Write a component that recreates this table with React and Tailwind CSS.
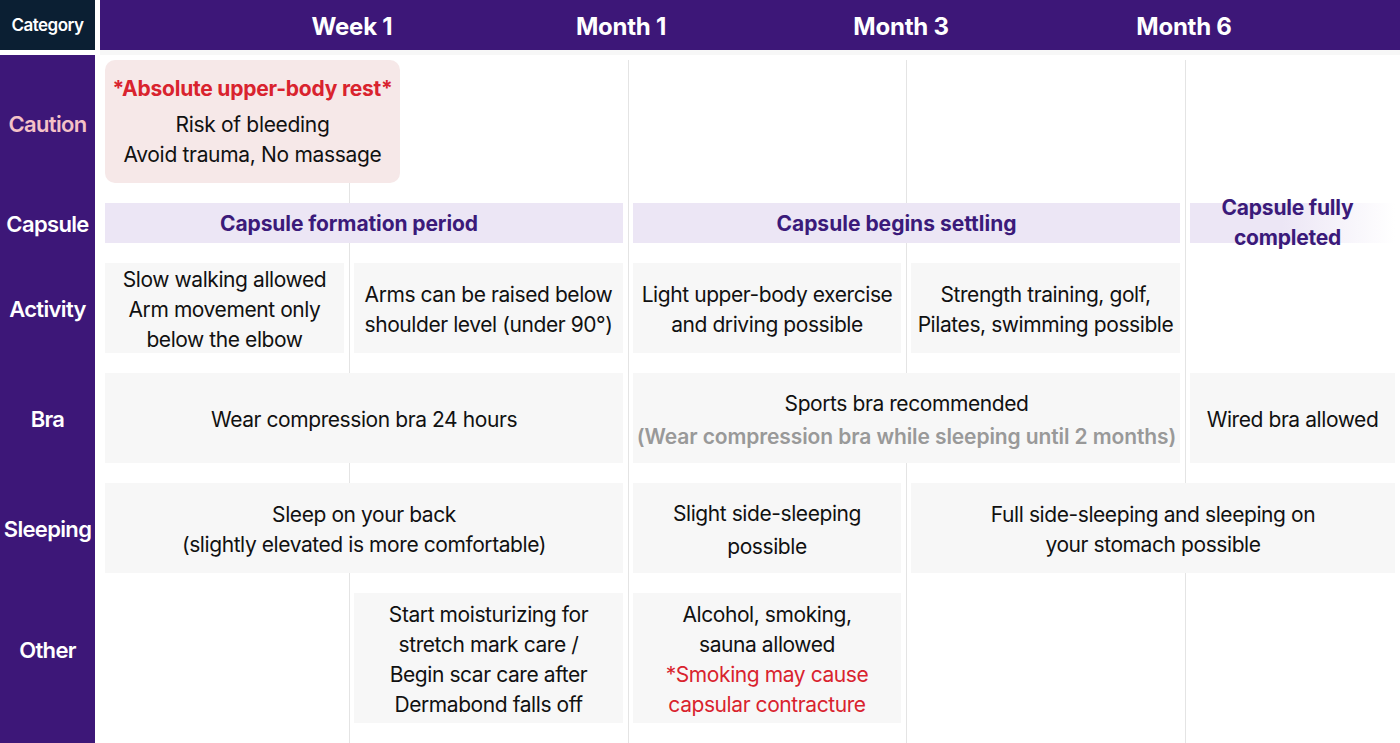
import React from "react";

const PURPLE = "bg-[#3d1778]";

function Box({ className = "", children }) {
  return (
    <div
      className={
        "my-[10px] mx-[5px] pt-[3px] bg-[#f7f7f7] flex flex-col items-center justify-center text-center text-[21px] leading-[30px] text-[#111] tracking-[-0.02em] " +
        className
      }
    >
      {children}
    </div>
  );
}

function Label({ children, className = "", color = "text-white" }) {
  return (
    <div
      className={
        "col-start-1 bg-[#3d1778] flex items-center justify-center font-semibold text-[22px] tracking-[-0.03em] " +
        color +
        " " +
        className
      }
    >
      {children}
    </div>
  );
}

export default function App() {
  return (
    <div
      className="w-[1400px] h-[743px] bg-white overflow-hidden"
      style={{ fontFamily: "Inter, 'Noto Sans', sans-serif" }}
    >
      {/* header */}
      <div className="flex h-[50px]">
        <div className="w-[95px] bg-[#0b1f33] flex items-center justify-center pt-[2px] text-white font-semibold text-[17px] tracking-[-0.03em]">
          Category
        </div>
        <div className="w-[5px]" />
        <div className={"flex-1 flex items-center pt-[3px] pl-[122px] text-white font-bold text-[24px] tracking-[-0.01em] " + PURPLE}>
          <div className="w-[260px] text-center">Week 1</div>
          <div className="w-[278px] text-center">Month 1</div>
          <div className="w-[282px] text-center">Month 3</div>
          <div className="w-[284px] text-center">Month 6</div>
        </div>
      </div>
      <div className="flex h-[5px]">
        <div className="w-[100px]" />
        <div className="flex-1 bg-[#f7f7f7]" />
      </div>

      {/* body grid */}
      <div className="grid grid-cols-[95px_5px_249px_279px_278px_279px_215px] grid-rows-[138px_60px_110px_110px_110px_160px]">
        {/* background vertical lines */}
        <div className="col-start-4 row-start-1 row-end-7 mt-[5px] border-l border-[#e4e4e4]" />
        <div className="col-start-5 row-start-1 row-end-7 mt-[5px] border-l border-[#e4e4e4]" />
        <div className="col-start-6 row-start-1 row-end-7 mt-[5px] border-l border-[#e4e4e4]" />
        <div className="col-start-7 row-start-1 row-end-7 mt-[5px] border-l border-[#e4e4e4]" />

        {/* labels */}
        <Label className="row-start-1" color="text-[#f4c2c7]">Caution</Label>
        <Label className="row-start-2 pt-[3px]">Capsule</Label>
        <Label className="row-start-3 pt-[3px]">Activity</Label>
        <Label className="row-start-4 pt-[3px]">Bra</Label>
        <Label className="row-start-5 pt-[3px]">Sleeping</Label>
        <Label className="row-start-6 pb-[26px]">Other</Label>

        {/* Caution */}
        <div className="col-start-3 col-span-2 row-start-1 mt-[5px] mb-[10px] ml-[5px] w-[295px] rounded-[10px] bg-[#f6e8e8] flex flex-col items-center justify-center text-center tracking-[-0.02em]">
          <div className="text-[#d9232e] font-bold text-[21px] leading-[30px] mb-[6px] tracking-[-0.01em]">
            *Absolute upper-body rest*
          </div>
          <div className="text-[21px] leading-[30px] text-[#111]">Risk of bleeding</div>
          <div className="text-[21px] leading-[30px] text-[#111]">Avoid trauma, No massage</div>
        </div>

        {/* Capsule */}
        <div className="col-start-3 col-span-2 row-start-2 my-[10px] mx-[5px] pt-[2px] bg-[#ece6f5] flex items-center justify-center pr-[30px] text-[#3b1a7a] font-bold text-[21px] tracking-[-0.005em]">
          Capsule formation period
        </div>
        <div className="col-start-5 col-span-2 row-start-2 my-[10px] mx-[5px] pt-[2px] bg-[#ece6f5] flex items-center justify-center pr-[20px] text-[#3b1a7a] font-bold text-[21px] tracking-[0em]">
          Capsule begins settling
        </div>
        <div className="col-start-7 row-start-2 my-[10px] mx-[5px] bg-[linear-gradient(to_right,#ece6f5_45%,#ffffff)] flex items-center justify-center pr-[10px] text-[#3b1a7a] font-bold text-[21px] leading-[30px] tracking-[-0.01em] text-center">
          <div className="-mt-[1px]">
            Capsule fully
            <br />
            completed
          </div>
        </div>

        {/* Activity */}
        <Box className="col-start-3 row-start-3">
          Slow walking allowed
          <br />
          Arm movement only
          <br />
          below the elbow
        </Box>
        <Box className="col-start-4 row-start-3">
          Arms can be raised below
          <br />
          shoulder level (under 90°)
        </Box>
        <Box className="col-start-5 row-start-3">
          Light upper-body exercise
          <br />
          and driving possible
        </Box>
        <Box className="col-start-6 row-start-3">
          Strength training, golf,
          <br />
          Pilates, swimming possible
        </Box>

        {/* Bra */}
        <Box className="col-start-3 col-span-2 row-start-4">Wear compression bra 24 hours</Box>
        <Box className="col-start-5 col-span-2 row-start-4 leading-[33px]">
          <div>Sports bra recommended</div>
          <div className="text-[#999] font-semibold tracking-[-0.005em]">
            (Wear compression bra while sleeping until 2 months)
          </div>
        </Box>
        <Box className="col-start-7 row-start-4">Wired bra allowed</Box>

        {/* Sleeping */}
        <Box className="col-start-3 col-span-2 row-start-5">
          Sleep on your back
          <br />
          (slightly elevated is more comfortable)
        </Box>
        <Box className="col-start-5 row-start-5 leading-[33px]">
          Slight side-sleeping
          <br />
          possible
        </Box>
        <Box className="col-start-6 col-span-2 row-start-5">
          Full side-sleeping and sleeping on
          <br />
          your stomach possible
        </Box>

        {/* Other */}
        <Box className="col-start-4 row-start-6 mb-[20px]">
          Start moisturizing for
          <br />
          stretch mark care /
          <br />
          Begin scar care after
          <br />
          Dermabond falls off
        </Box>
        <Box className="col-start-5 row-start-6 mb-[20px]">
          <div>
            Alcohol, smoking,
            <br />
            sauna allowed
          </div>
          <div className="text-[#d9232e]">
            *Smoking may cause
            <br />
            capsular contracture
          </div>
        </Box>
      </div>
    </div>
  );
}
